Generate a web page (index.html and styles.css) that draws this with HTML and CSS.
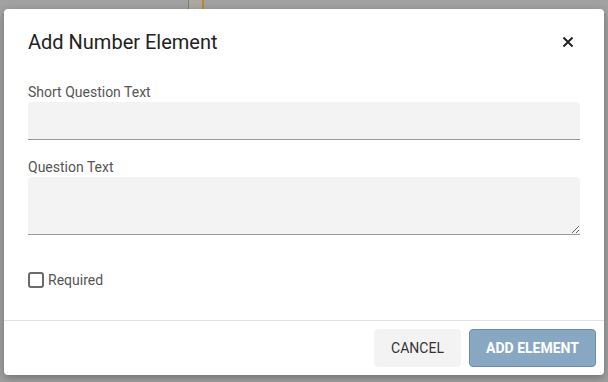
FILE: index.html
```html
<!DOCTYPE html>
<html>
<head>
<meta charset="utf-8">
<link rel="stylesheet" href="styles.css">
</head>
<body>
<div class="dialog">
  <div class="dialog-header">
    <h2 class="dialog-title">Add Number Element</h2>
    <button class="close-btn" aria-label="Close">
      <svg width="12" height="12" viewBox="0 0 12 12"><path d="M1.5 1.5 L10.5 10.5 M10.5 1.5 L1.5 10.5" stroke="#222" stroke-width="2" fill="none"/></svg>
    </button>
  </div>
  <div class="dialog-body">
    <label class="field-label">Short Question Text</label>
    <input class="field-input" type="text">
    <label class="field-label">Question Text</label>
    <textarea class="field-textarea"></textarea>
    <label class="check-row"><input class="check" type="checkbox"><span>Required</span></label>
  </div>
  <div class="dialog-footer">
    <button class="btn btn-cancel">CANCEL</button>
    <button class="btn btn-primary">ADD ELEMENT</button>
  </div>
</div>
</body>
</html>
```

FILE: styles.css
```css
html, body {
  margin: 0;
  height: 100%;
}
body {
  padding: 9px 4px 0 4px;
  box-sizing: border-box;
  font-family: Roboto, "Liberation Sans", sans-serif;
  background-color: #a1a1a1;
  background-image:
    linear-gradient(to right, transparent 188px, #7d7d7d 188px, #7d7d7d 189px, #aca79f 189px, #aca79f 202px, #c5842a 202px, #c5842a 204px, transparent 204px);
  background-size: 100% 9px;
  background-repeat: no-repeat;
}
.dialog {
  width: 600px;
  height: 366px;
  background: #fff;
  border-radius: 4px;
  box-shadow: 0 3px 8px rgba(0,0,0,0.3);
  display: flex;
  flex-direction: column;
}
.dialog-header {
  display: flex;
  justify-content: space-between;
  align-items: center;
  padding: 21px 24px 0 24px;
}
.dialog-title {
  margin: 0;
  font-size: 20px;
  line-height: 24px;
  font-weight: 400;
  color: #222;
}
.close-btn {
  width: 24px;
  height: 24px;
  padding: 0;
  border: 0;
  background: transparent;
  display: flex;
  align-items: center;
  justify-content: center;
}
.dialog-body {
  flex: 1;
  padding: 28px 24px 0 24px;
  display: flex;
  flex-direction: column;
}
.field-label {
  font-size: 14px;
  line-height: 20px;
  color: #555;
}
.field-input, .field-textarea {
  display: block;
  box-sizing: border-box;
  width: 100%;
  margin: 0;
  border: 0;
  border-bottom: 1px solid #999;
  border-radius: 4px 4px 0 0;
  background: #f3f3f3;
  font-family: inherit;
  font-size: 14px;
  padding: 8px 10px;
  outline: none;
}
.field-input {
  height: 38px;
  margin-bottom: 17px;
}
.field-textarea {
  height: 58px;
  resize: vertical;
}
.check-row {
  display: flex;
  align-items: center;
  gap: 4px;
  margin-top: 35px;
  font-size: 14px;
  line-height: 20px;
  color: #555;
}
.check {
  appearance: none;
  -webkit-appearance: none;
  width: 16px;
  height: 16px;
  margin: 0;
  border: 2px solid #6a6a6a;
  border-radius: 3px;
  background: #fff;
  box-sizing: border-box;
}
.dialog-footer {
  display: flex;
  justify-content: flex-end;
  gap: 8px;
  padding: 8px;
  border-top: 1px solid #e2e2e2;
}
.btn {
  height: 38px;
  border-radius: 4px;
  font-family: inherit;
  font-size: 14px;
  text-transform: uppercase;
  cursor: pointer;
}
.btn-cancel {
  width: 87px;
  background: #f3f3f3;
  border: 0;
  color: #333;
  font-weight: 400;
}
.btn-primary {
  width: 127px;
  background: #88a7c3;
  border: 1px solid #6d8daf;
  color: #fff;
  font-weight: 700;
}
```
